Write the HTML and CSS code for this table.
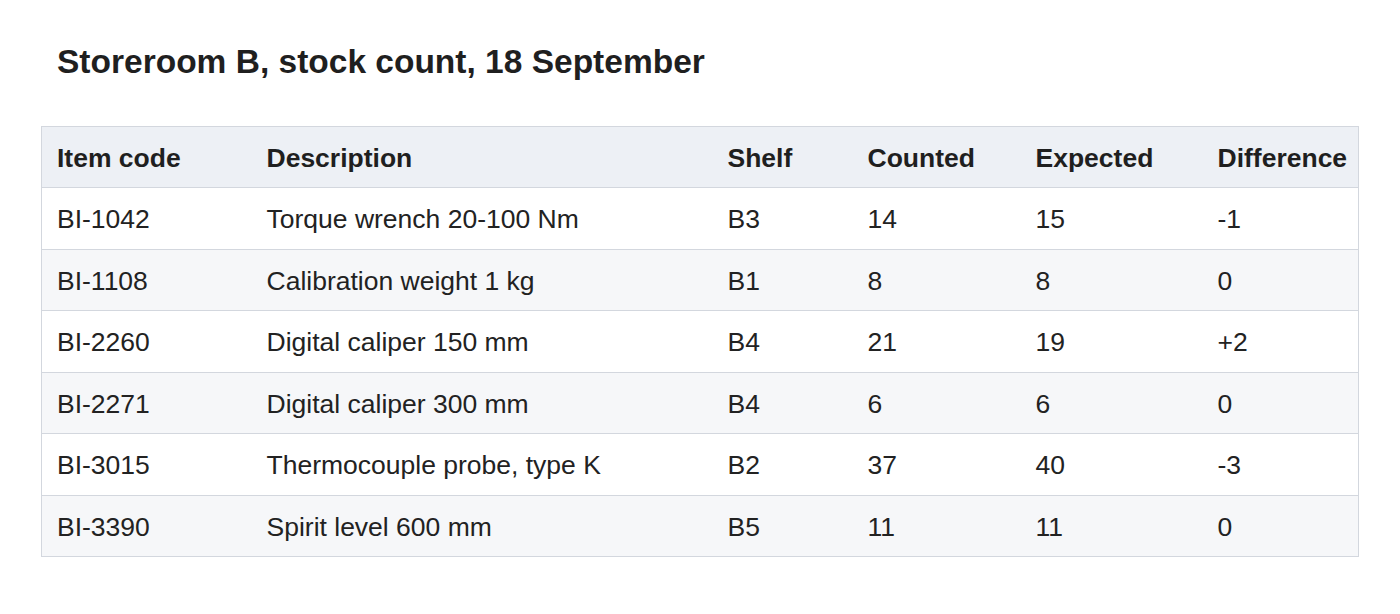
FILE: index.html
```html
<!DOCTYPE html>
<html>
<head>
<meta charset="utf-8">
<link rel="stylesheet" href="styles.css">
</head>
<body>
<main class="page">
  <h1 class="title">Storeroom B, stock count, 18 September</h1>
  <table class="stock">
    <colgroup>
      <col class="c-code"><col class="c-desc"><col class="c-shelf"><col class="c-counted"><col class="c-expected"><col class="c-diff">
    </colgroup>
    <thead>
      <tr><th>Item code</th><th>Description</th><th>Shelf</th><th>Counted</th><th>Expected</th><th>Difference</th></tr>
    </thead>
    <tbody>
      <tr><td>BI-1042</td><td>Torque wrench 20-100 Nm</td><td>B3</td><td>14</td><td>15</td><td>-1</td></tr>
      <tr><td>BI-1108</td><td>Calibration weight 1 kg</td><td>B1</td><td>8</td><td>8</td><td>0</td></tr>
      <tr><td>BI-2260</td><td>Digital caliper 150 mm</td><td>B4</td><td>21</td><td>19</td><td>+2</td></tr>
      <tr><td>BI-2271</td><td>Digital caliper 300 mm</td><td>B4</td><td>6</td><td>6</td><td>0</td></tr>
      <tr><td>BI-3015</td><td>Thermocouple probe, type K</td><td>B2</td><td>37</td><td>40</td><td>-3</td></tr>
      <tr><td>BI-3390</td><td>Spirit level 600 mm</td><td>B5</td><td>11</td><td>11</td><td>0</td></tr>
    </tbody>
  </table>
</main>
</body>
</html>
```
FILE: styles.css
```css
html, body {
  margin: 0;
  background: #ffffff;
}
.page {
  padding: 38px 41px 0 41px;
  font-family: "Liberation Sans", Arial, sans-serif;
  color: #222222;
}
.title {
  margin: 0 0 39.5px 16px;
  font-size: 33.5px;
  line-height: 48px;
  font-weight: bold;
  color: #1f1f1f;
}
.stock {
  border-collapse: collapse;
  table-layout: fixed;
  width: 1317px;
  border: 1px solid #d3d7de;
  font-size: 26.5px;
}
.c-code { width: 210px; }
.c-desc { width: 461px; }
.c-shelf { width: 140px; }
.c-counted { width: 168px; }
.c-expected { width: 182px; }
.c-diff { width: 156px; }
.stock th,
.stock td {
  box-sizing: border-box;
  text-align: left;
  padding: 3px 0 0 15px;
  height: 61.5px;
  border-bottom: 1px solid #d3d7de;
  white-space: nowrap;
}
.stock th {
  background: #edf0f5;
  font-weight: bold;
  color: #1f1f1f;
}
.stock tbody tr:nth-child(even) td {
  background: #f6f7f9;
}
```
